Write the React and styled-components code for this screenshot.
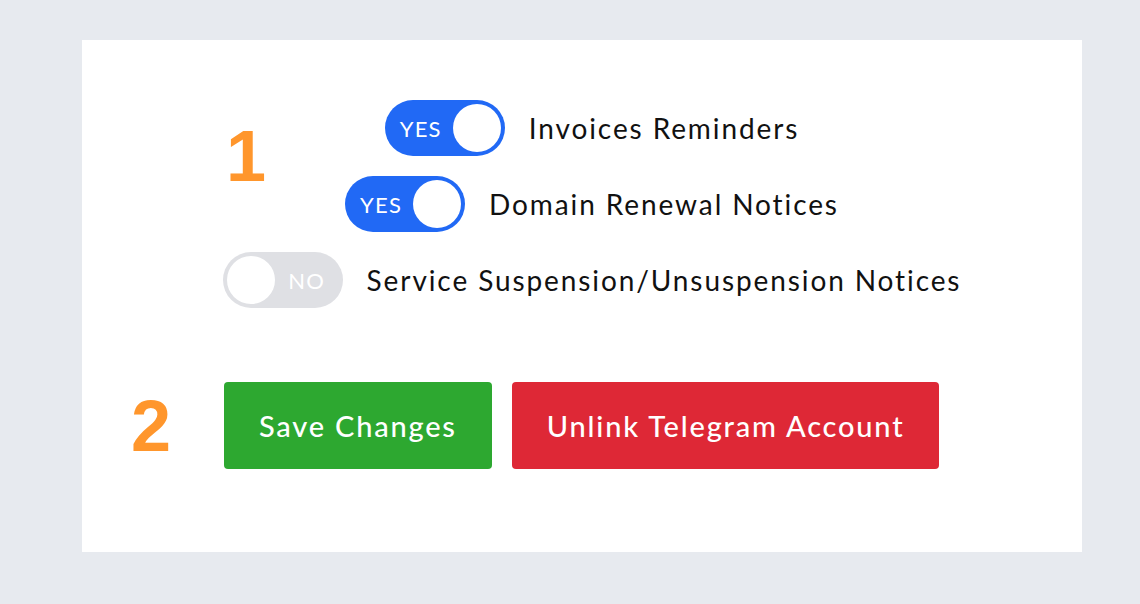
import React, { useState } from "react";
import styled, { createGlobalStyle } from "styled-components";

const GlobalStyle = createGlobalStyle`
    html, body {
        margin: 0;
        padding: 0;
        background: #e7eaef;
    }

    body {
        font-family: Lato, "Noto Sans", sans-serif;
        color: #111;
    }
`;

const NOTICES = [
    { id: 'invoices', label: 'Invoices Reminders', on: true },
    { id: 'domains', label: 'Domain Renewal Notices', on: true },
    { id: 'suspension', label: 'Service Suspension/Unsuspension Notices', on: false },
];

const Toggle = ({ on, onClick }) => (
    <SwitchTrack $on={on} onClick={onClick} type="button">
        <SwitchText>{on ? 'YES' : 'NO'}</SwitchText>
        <SwitchKnob />
    </SwitchTrack>
);

const App = () => {
    const [notices, setNotices] = useState(NOTICES);

    const flip = (id) => {
        setNotices(notices.map((n) => (n.id === id ? { ...n, on: !n.on } : n)));
    };

    return (
        <Page>
            <GlobalStyle />
            <Card>
                <Section>
                    <StepMarker $offset="144px" $top="20px">1</StepMarker>
                    <ToggleList>
                        {notices.map((n) => (
                            <ToggleRow key={n.id}>
                                <Toggle on={n.on} onClick={() => flip(n.id)} />
                                <RowLabel>{n.label}</RowLabel>
                            </ToggleRow>
                        ))}
                    </ToggleList>
                </Section>

                <Actions>
                    <StepMarker $offset="49px">2</StepMarker>
                    <ButtonGroup>
                        <ActionButton $variant="save">Save Changes</ActionButton>
                        <ActionButton $variant="danger">Unlink Telegram Account</ActionButton>
                    </ButtonGroup>
                </Actions>
            </Card>
        </Page>
    );
};

const Page = styled.div`
    width: 1140px;
    height: 604px;
    padding: 40px 0 0 82px;
    box-sizing: border-box;
`;

const Card = styled.div`
    width: 1000px;
    height: 512px;
    background: #fff;
    padding-top: 60px;
    box-sizing: border-box;
    display: flex;
    flex-direction: column;
    gap: 74px;
`;

const Section = styled.div`
    display: flex;
    align-items: flex-start;
`;

const StepMarker = styled.div`
    font-family: "Liberation Sans", Arial, sans-serif;
    font-weight: 700;
    font-size: 72px;
    line-height: 1;
    color: #ff962c;
    width: 40px;
    flex-shrink: 0;
    margin-left: ${(p) => p.$offset};
    margin-top: ${(p) => p.$top || 0};
`;

const ToggleList = styled.div`
    flex: 1;
    min-width: 0;
    display: flex;
    flex-direction: column;
    align-items: center;
    gap: 20px;
    margin-right: 164px;
`;

const ToggleRow = styled.div`
    display: flex;
    align-items: center;
    gap: 24px;
    white-space: nowrap;
`;

const RowLabel = styled.span`
    font-size: 28px;
    letter-spacing: 1.9px;
    color: #111;
`;

const SwitchTrack = styled.button`
    display: flex;
    flex-direction: ${(p) => (p.$on ? 'row' : 'row-reverse')};
    align-items: center;
    width: 120px;
    height: 56px;
    padding: 4px;
    border: none;
    border-radius: 28px;
    background: ${(p) => (p.$on ? '#2169f5' : '#dfe0e4')};
    box-sizing: border-box;
    cursor: pointer;
    flex-shrink: 0;
`;

const SwitchText = styled.span`
    flex: 1;
    text-align: center;
    font-family: Lato, sans-serif;
    font-size: 22px;
    letter-spacing: 1.2px;
    color: #fff;
`;

const SwitchKnob = styled.span`
    width: 48px;
    height: 48px;
    border-radius: 50%;
    background: #fff;
    flex-shrink: 0;
`;

const Actions = styled.div`
    display: flex;
    align-items: center;
`;

const ButtonGroup = styled.div`
    display: flex;
    gap: 20px;
    margin-left: 53px;
`;

const ActionButton = styled.button`
    height: 87px;
    padding: 0 35px;
    border: none;
    border-radius: 4px;
    background: ${(p) => (p.$variant === 'danger' ? '#de2836' : '#2da830')};
    color: #fff;
    font-family: Lato, sans-serif;
    font-weight: 500;
    font-size: 29px;
    letter-spacing: 1.8px;
    cursor: pointer;
`;

export default App;
